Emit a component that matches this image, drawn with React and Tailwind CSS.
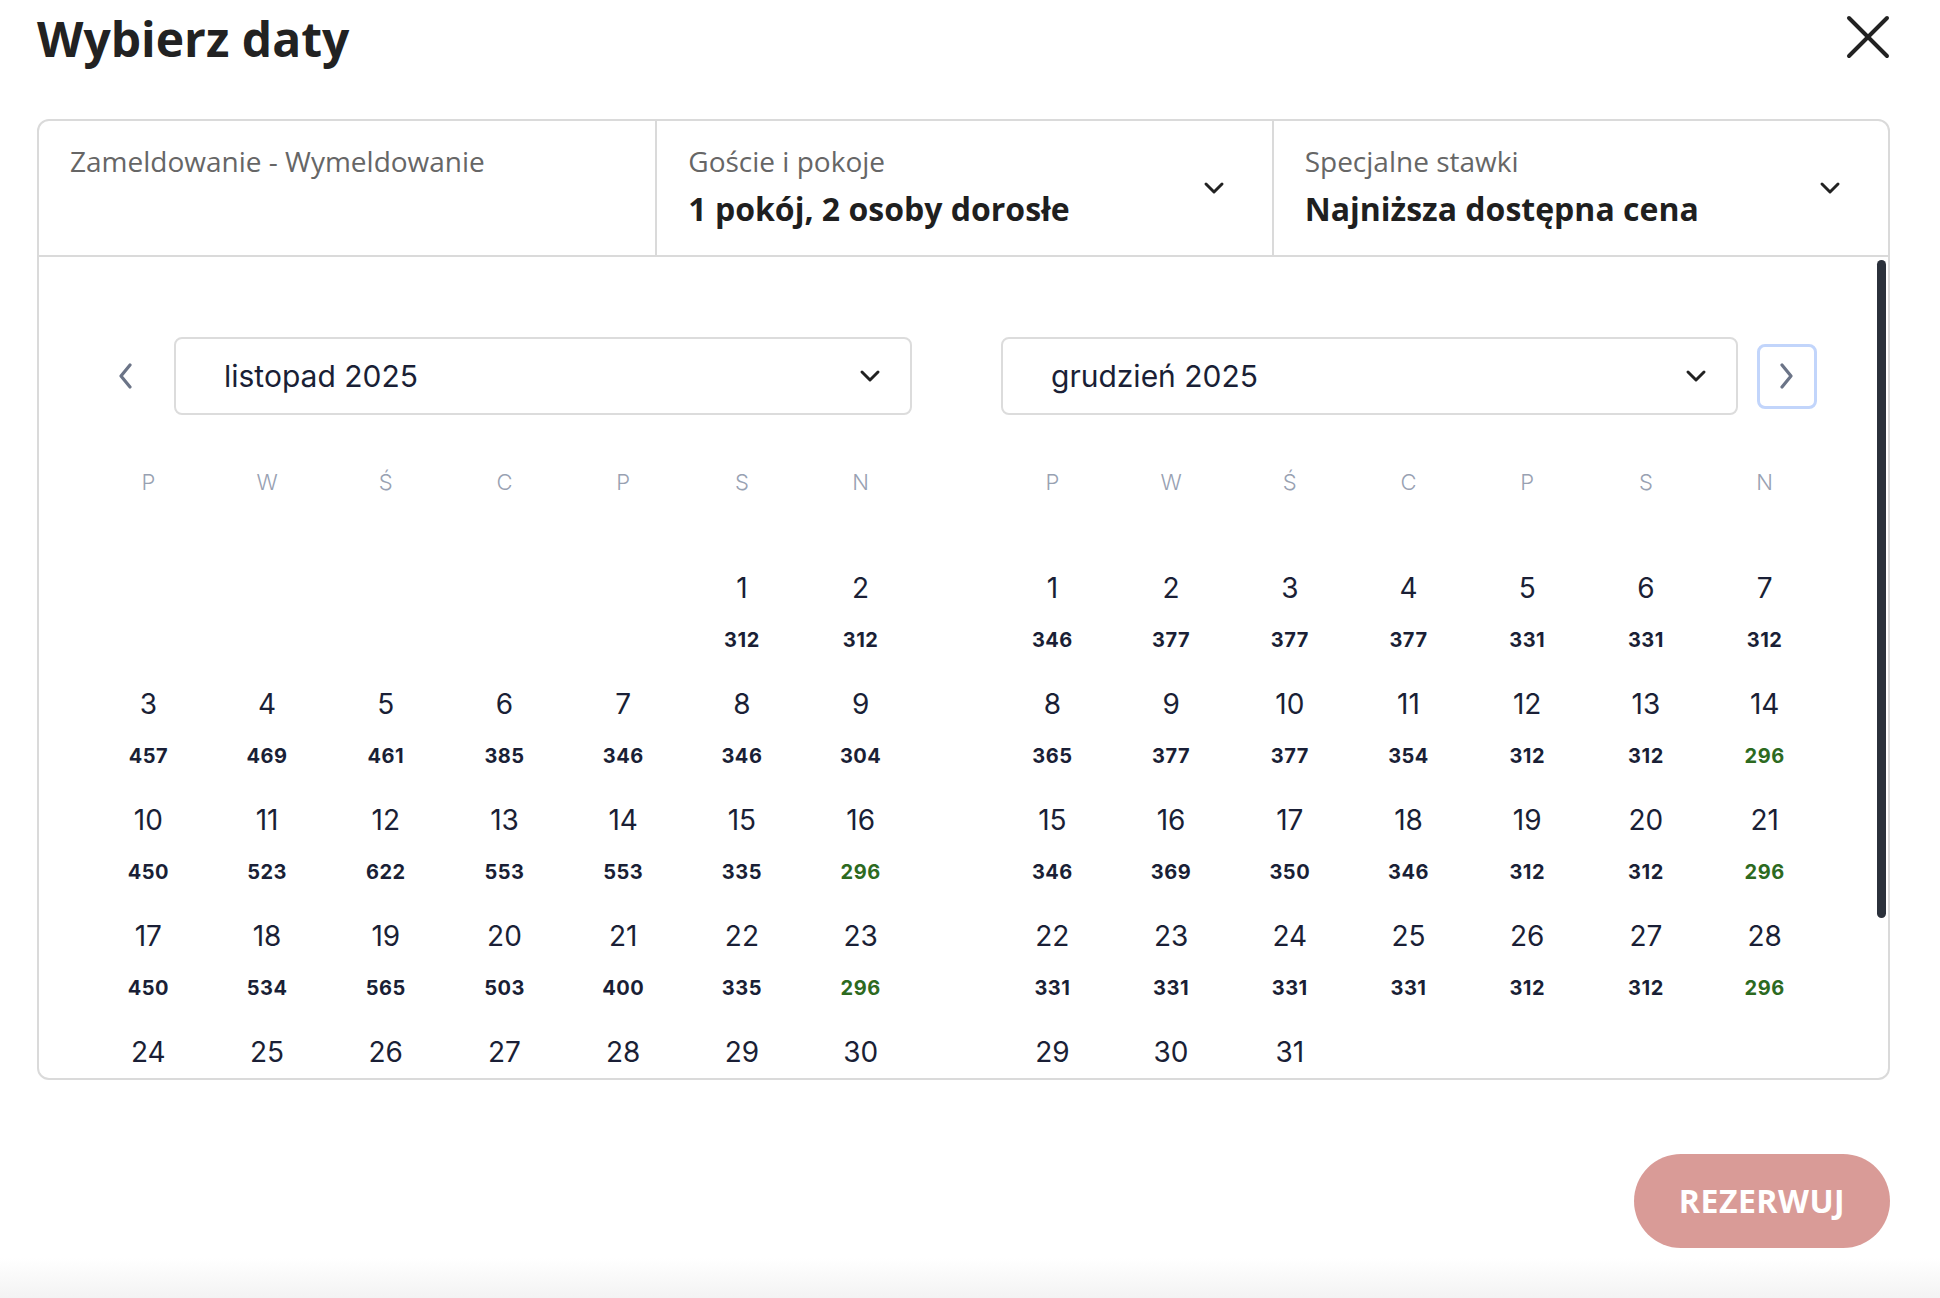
import React from 'react';

// ceny widoczne w kalendarzu (ostatni tydzień jest poza widokiem, więc bez cen)
const novPrices = {
  1: 312, 2: 312,
  3: 457, 4: 469, 5: 461, 6: 385, 7: 346, 8: 346, 9: 304,
  10: 450, 11: 523, 12: 622, 13: 553, 14: 553, 15: 335, 16: 296,
  17: 450, 18: 534, 19: 565, 20: 503, 21: 400, 22: 335, 23: 296,
};

const decPrices = {
  1: 346, 2: 377, 3: 377, 4: 377, 5: 331, 6: 331, 7: 312,
  8: 365, 9: 377, 10: 377, 11: 354, 12: 312, 13: 312, 14: 296,
  15: 346, 16: 369, 17: 350, 18: 346, 19: 312, 20: 312, 21: 296,
  22: 331, 23: 331, 24: 331, 25: 331, 26: 312, 27: 312, 28: 296,
};

const weekdays = ['P', 'W', 'Ś', 'C', 'P', 'S', 'N'];

function Chevron({ className = '' }) {
  return (
    <svg width="22" height="14" viewBox="0 0 22 14" fill="none" className={className}>
      <polyline points="3,3 11,11 19,3" stroke="#222" strokeWidth="3" strokeLinecap="round" strokeLinejoin="round" />
    </svg>
  );
}

function Arrow({ dir }) {
  const pts = dir === 'left' ? '11,2 2,13 11,24' : '2,2 11,13 2,24';
  return (
    <svg width="14" height="26" viewBox="0 0 14 26" fill="none">
      <polyline points={pts} stroke="#6b7487" strokeWidth="3.2" strokeLinecap="round" strokeLinejoin="round" />
    </svg>
  );
}

function MonthGrid({ offset, days, prices }) {
  const cells = [];
  for (let i = 0; i < offset; i++) cells.push(null);
  for (let d = 1; d <= days; d++) cells.push(d);

  return (
    <>
      <div className="mt-[47px] grid grid-cols-7 h-[40px] items-center text-center">
        {weekdays.map((w, i) => (
          <span key={i} className="text-[22px] font-light text-[#98a1b2] leading-[40px]">{w}</span>
        ))}
      </div>
      <div className="mt-[52px] grid grid-cols-7">
        {cells.map((d, i) => (
          <div key={i} className="h-[116px] flex flex-col items-center pt-[14px]">
            {d && (
              <>
                <span className="h-[40px] leading-[40px] text-[28px] text-[#1a1f36]">{d}</span>
                {prices[d] && (
                  <span
                    className={`mt-[17px] leading-[30px] text-[20px] font-bold tracking-[0.5px] ${
                      prices[d] === 296 ? 'text-[#2d6a1f]' : 'text-[#1a1f36]'
                    }`}
                  >
                    {prices[d]}
                  </span>
                )}
              </>
            )}
          </div>
        ))}
      </div>
    </>
  );
}

function MonthSelect({ label, className = '' }) {
  return (
    <div className={`h-[78px] border-2 border-[#dcdcdc] rounded-[8px] flex items-center justify-between pl-[48px] pr-[29px] ${className}`}>
      <span className="text-[30px] text-[#1a1f36]">{label}</span>
      <Chevron />
    </div>
  );
}

function HeaderField({ label, value }) {
  return (
    <div className="border-l-2 border-[#dadada] flex items-center justify-between pl-[31px] pr-[47px]">
      <div className="self-start mt-[21px] flex flex-col">
        <span className="text-[28px] leading-[38px] text-[#666]">{label}</span>
        <span className="mt-[7px] text-[32px] leading-[44px] font-bold text-[#1f1f1f]">{value}</span>
      </div>
      <Chevron />
    </div>
  );
}

export default function App() {
  return (
    <div className="w-[1940px] h-[1298px] bg-white relative overflow-hidden font-['Open_Sans',sans-serif]">
      <div className="h-[119px] flex items-start justify-between pl-[37px] pr-[50px] pt-[15px]">
        <h1 className="text-[48px] leading-none font-bold text-[#222]">Wybierz daty</h1>
        <button className="w-[44px] h-[44px]">
          <svg width="44" height="44" viewBox="0 0 44 44" fill="none">
            <line x1="3" y1="3" x2="41" y2="41" stroke="#222" strokeWidth="4" strokeLinecap="round" />
            <line x1="41" y1="3" x2="3" y2="41" stroke="#222" strokeWidth="4" strokeLinecap="round" />
          </svg>
        </button>
      </div>

      <div className="ml-[37px] w-[1853px] h-[961px] border-2 border-[#dadada] rounded-[12px] overflow-hidden relative flex flex-col">
        <div className="h-[136px] shrink-0 grid grid-cols-3 border-b-2 border-[#dadada]">
          <div className="pl-[31px] pt-[21px]">
            <div className="text-[28px] leading-[38px] text-[#666]">Zameldowanie - Wymeldowanie</div>
          </div>
          <HeaderField label="Goście i pokoje" value="1 pokój, 2 osoby dorosłe" />
          <HeaderField label="Specjalne stawki" value="Najniższa dostępna cena" />
        </div>

        <div className="flex-1 overflow-hidden pt-[80px] pl-[50px] flex gap-[73px] font-['Inter',sans-serif]">
          <div className="w-[831px] shrink-0">
            <div className="flex items-center h-[78px]">
              <button className="w-[74px] mr-[11px] flex justify-center">
                <Arrow dir="left" />
              </button>
              <MonthSelect label="listopad 2025" className="w-[738px]" />
            </div>
            <MonthGrid offset={5} days={30} prices={novPrices} />
          </div>
          <div className="w-[831px] shrink-0">
            <div className="flex items-center h-[78px]">
              <MonthSelect label="grudzień 2025" className="ml-[8px] w-[737px]" />
              <button className="ml-[19px] w-[60px] h-[65px] border-[3px] border-[#c2d5fb] rounded-[8px] flex items-center justify-center">
                <Arrow dir="right" />
              </button>
            </div>
            <MonthGrid offset={0} days={31} prices={decPrices} />
          </div>
        </div>

        <div className="absolute left-[1838px] top-[139px] w-[9px] h-[658px] rounded-full bg-[#2b313b]" />
      </div>

      <div className="mt-[74px] flex justify-end pr-[50px]">
        <button className="w-[256px] h-[94px] rounded-full bg-[#d99b97] text-white text-[32px] font-bold tracking-[0.5px]">
          REZERWUJ
        </button>
      </div>

      <div className="absolute bottom-0 left-0 w-full h-[40px] bg-linear-to-b from-white to-[#f3f3f3]" />
    </div>
  );
}
